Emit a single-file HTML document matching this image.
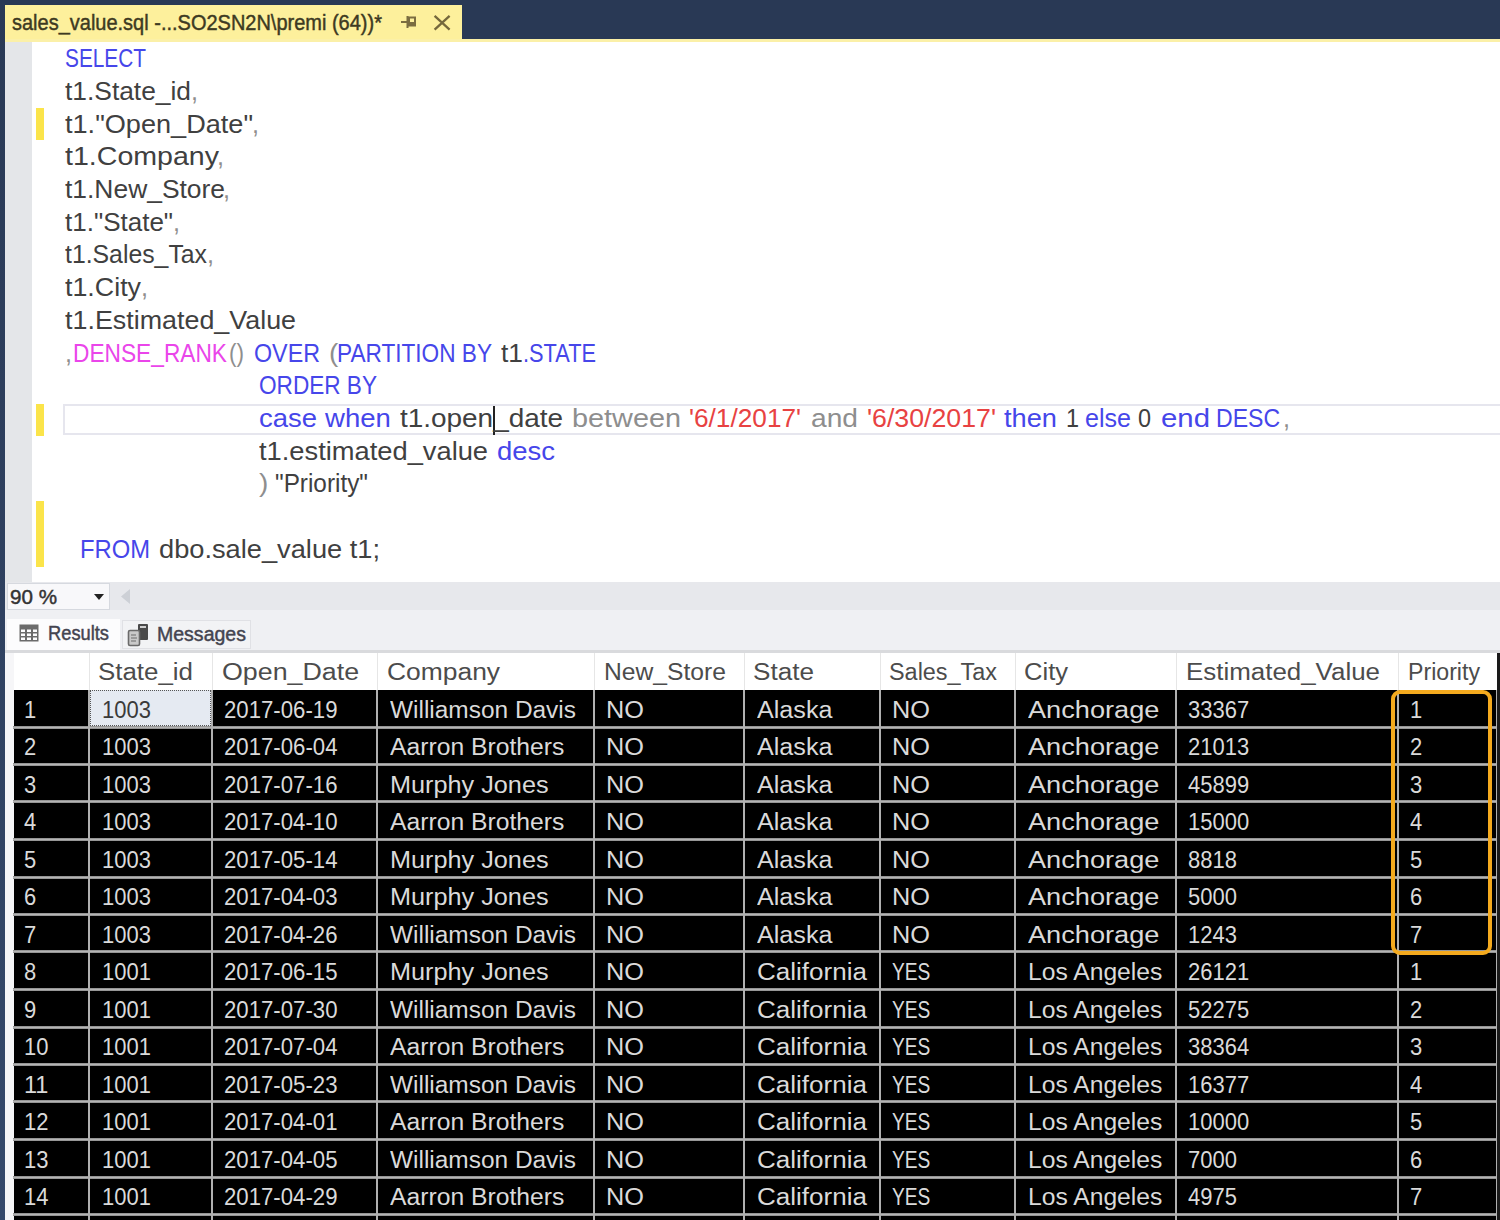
<!DOCTYPE html><html><head><meta charset="utf-8"><style>html,body{margin:0;padding:0;width:1500px;height:1220px;overflow:hidden;background:#fff;}body{position:relative;font-family:"Liberation Sans", sans-serif;}.b{position:absolute;}.t{position:absolute;white-space:pre;line-height:1.1171875;transform-origin:0 0;}</style></head><body><div class="b" style="left:0px;top:0px;width:1500px;height:39px;background:#293955;"></div><div class="b" style="left:0px;top:0px;width:5px;height:1220px;background:linear-gradient(#293955,#35496b);"></div><div class="b" style="left:5px;top:5px;width:457px;height:36px;background:#fdf09c;"></div><div class="b" style="left:5px;top:39px;width:1495px;height:3px;background:#fbf0a8;"></div><div class="b" style="left:5px;top:42px;width:27px;height:540px;background:#e4e6e9;"></div><div class="b" style="left:32px;top:42px;width:1468px;height:540px;background:#ffffff;"></div><div class="b" style="left:63px;top:404px;width:1445px;height:31px;background:transparent;border:2px solid #e6e6ee;box-sizing:border-box;"></div><div class="b" style="left:36px;top:108px;width:8px;height:32px;background:#fbe44a;"></div><div class="b" style="left:36px;top:404px;width:8px;height:32px;background:#fbe44a;"></div><div class="b" style="left:36px;top:501px;width:8px;height:66px;background:#fbe44a;"></div><div class="b" style="left:493px;top:406px;width:2px;height:29px;background:#222;"></div><svg class="b" style="left:400px;top:14px" width="20" height="18"><g stroke="#7b6d40" fill="none" stroke-width="2"><path d="M1 8 H7.5 M7.5 2 V14"/><rect x="9" y="3.5" width="6" height="8"/></g><rect x="8" y="8" width="8" height="4" fill="#7b6d40"/></svg><svg class="b" style="left:432px;top:14px" width="20" height="18"><path d="M2.6 1.8 L17.6 15.6 M17.6 1.8 L2.6 15.6" stroke="#75683c" stroke-width="2.3" fill="none"/></svg><div class="b" style="left:5px;top:582px;width:1495px;height:28px;background:#e7e8ec;"></div><div class="b" style="left:7px;top:583px;width:103px;height:27px;background:#f8f8fa;border:1px solid #d6d9df;box-sizing:border-box;"></div><svg class="b" style="left:93px;top:593px" width="12" height="8"><path d="M1 1 L11 1 L6 7 Z" fill="#222"/></svg><svg class="b" style="left:119px;top:588px" width="12" height="17"><path d="M11 1 L11 16 L2 8.5 Z" fill="#cdd0d6"/></svg><div class="b" style="left:5px;top:610px;width:1495px;height:40px;background:#eff0f3;"></div><div class="b" style="left:7px;top:619px;width:113px;height:31px;background:#fcfcfd;"></div><div class="b" style="left:122px;top:620px;width:129px;height:29px;background:#f2f3f5;border:1px solid #e0e1e5;box-sizing:border-box;"></div><svg class="b" style="left:19px;top:624px" width="20" height="18"><rect x="0.5" y="0.5" width="19" height="17" fill="#6b6b6b"/><g fill="#fcfcfd"><rect x="2" y="5.5" width="4" height="2.5"/><rect x="2" y="9.5" width="4" height="2.5"/><rect x="2" y="13.5" width="4" height="2.5"/><rect x="8" y="5.5" width="4" height="2.5"/><rect x="8" y="9.5" width="4" height="2.5"/><rect x="8" y="13.5" width="4" height="2.5"/><rect x="14" y="5.5" width="4" height="2.5"/><rect x="14" y="9.5" width="4" height="2.5"/><rect x="14" y="13.5" width="4" height="2.5"/></g></svg><svg class="b" style="left:127px;top:623px" width="22" height="24"><rect x="11" y="1" width="10" height="16" rx="1" fill="#4a4a4a"/><rect x="13" y="3" width="6" height="2" fill="#cfcfcf"/><rect x="1.5" y="7.5" width="11" height="15" rx="1.5" fill="#c9c9c9" stroke="#6a6a6a" stroke-width="1.6"/><path d="M4 12h5M4 15h6M4 18h5" stroke="#8a8a8a" stroke-width="1.3"/></svg><div class="b" style="left:5px;top:650px;width:1495px;height:3px;background:#d9dadd;"></div><div class="b" style="left:5px;top:653px;width:1495px;height:567px;background:#f6f6f8;"></div><div class="b" style="left:14px;top:653px;width:1483px;height:37px;background:#ffffff;"></div><div class="b" style="left:89px;top:653px;width:1px;height:37px;background:#e6e6e6;"></div><div class="b" style="left:212px;top:653px;width:1px;height:37px;background:#e6e6e6;"></div><div class="b" style="left:377px;top:653px;width:1px;height:37px;background:#e6e6e6;"></div><div class="b" style="left:594px;top:653px;width:1px;height:37px;background:#e6e6e6;"></div><div class="b" style="left:744px;top:653px;width:1px;height:37px;background:#e6e6e6;"></div><div class="b" style="left:880px;top:653px;width:1px;height:37px;background:#e6e6e6;"></div><div class="b" style="left:1015px;top:653px;width:1px;height:37px;background:#e6e6e6;"></div><div class="b" style="left:1176px;top:653px;width:1px;height:37px;background:#e6e6e6;"></div><div class="b" style="left:1398px;top:653px;width:1px;height:37px;background:#e6e6e6;"></div><div class="b" style="left:14px;top:690px;width:1483px;height:530px;background:#000;"></div><div class="b" style="left:13px;top:726px;width:1484px;height:3px;background:linear-gradient(#707070,#b4b4b4 30%,#b4b4b4 70%,#707070);"></div><div class="b" style="left:13px;top:763px;width:1484px;height:3px;background:linear-gradient(#707070,#b4b4b4 30%,#b4b4b4 70%,#707070);"></div><div class="b" style="left:13px;top:800px;width:1484px;height:3px;background:linear-gradient(#707070,#b4b4b4 30%,#b4b4b4 70%,#707070);"></div><div class="b" style="left:13px;top:838px;width:1484px;height:3px;background:linear-gradient(#707070,#b4b4b4 30%,#b4b4b4 70%,#707070);"></div><div class="b" style="left:13px;top:876px;width:1484px;height:3px;background:linear-gradient(#707070,#b4b4b4 30%,#b4b4b4 70%,#707070);"></div><div class="b" style="left:13px;top:913px;width:1484px;height:3px;background:linear-gradient(#707070,#b4b4b4 30%,#b4b4b4 70%,#707070);"></div><div class="b" style="left:13px;top:950px;width:1484px;height:3px;background:linear-gradient(#707070,#b4b4b4 30%,#b4b4b4 70%,#707070);"></div><div class="b" style="left:13px;top:988px;width:1484px;height:3px;background:linear-gradient(#707070,#b4b4b4 30%,#b4b4b4 70%,#707070);"></div><div class="b" style="left:13px;top:1026px;width:1484px;height:3px;background:linear-gradient(#707070,#b4b4b4 30%,#b4b4b4 70%,#707070);"></div><div class="b" style="left:13px;top:1063px;width:1484px;height:3px;background:linear-gradient(#707070,#b4b4b4 30%,#b4b4b4 70%,#707070);"></div><div class="b" style="left:13px;top:1100px;width:1484px;height:3px;background:linear-gradient(#707070,#b4b4b4 30%,#b4b4b4 70%,#707070);"></div><div class="b" style="left:13px;top:1138px;width:1484px;height:3px;background:linear-gradient(#707070,#b4b4b4 30%,#b4b4b4 70%,#707070);"></div><div class="b" style="left:13px;top:1176px;width:1484px;height:3px;background:linear-gradient(#707070,#b4b4b4 30%,#b4b4b4 70%,#707070);"></div><div class="b" style="left:13px;top:1213px;width:1484px;height:3px;background:linear-gradient(#707070,#b4b4b4 30%,#b4b4b4 70%,#707070);"></div><div class="b" style="left:88px;top:690px;width:2px;height:530px;background:#b0b0b0;"></div><div class="b" style="left:211px;top:690px;width:2px;height:530px;background:#b0b0b0;"></div><div class="b" style="left:376px;top:690px;width:2px;height:530px;background:#b0b0b0;"></div><div class="b" style="left:593px;top:690px;width:2px;height:530px;background:#b0b0b0;"></div><div class="b" style="left:743px;top:690px;width:2px;height:530px;background:#b0b0b0;"></div><div class="b" style="left:879px;top:690px;width:2px;height:530px;background:#b0b0b0;"></div><div class="b" style="left:1014px;top:690px;width:2px;height:530px;background:#b0b0b0;"></div><div class="b" style="left:1175px;top:690px;width:2px;height:530px;background:#b0b0b0;"></div><div class="b" style="left:1397px;top:690px;width:2px;height:530px;background:#b0b0b0;"></div><div class="b" style="left:1496px;top:690px;width:2px;height:530px;background:#b0b0b0;"></div><div class="b" style="left:1497px;top:653px;width:3px;height:567px;background:#1a1a1a;"></div><div class="b" style="left:90px;top:690px;width:121px;height:36px;background:#e5eaf2;border:1px dotted #555;box-sizing:border-box;"></div><div class="b" style="left:1391px;top:690px;width:101px;height:265px;background:transparent;border:4px solid #f4aa1e;border-radius:9px;box-sizing:border-box;"></div><div class="t" id="t0" style="left:65.0px;top:44.07px;font-size:26px;color:#4646ea;transform:scaleX(0.8012);">SELECT</div><div class="t" id="t1" style="left:65.0px;top:76.79px;font-size:26px;color:#404040;transform:scaleX(1.0137);">t1.State_id</div><div class="t" id="t2" style="left:65.0px;top:109.51px;font-size:26px;color:#404040;transform:scaleX(1.0427);">t1.&quot;Open_Date&quot;</div><div class="t" id="t3" style="left:65.0px;top:142.23px;font-size:26px;color:#404040;transform:scaleX(1.0984);">t1.Company</div><div class="t" id="t4" style="left:65.0px;top:174.95px;font-size:26px;color:#404040;transform:scaleX(1.0159);">t1.New_Store</div><div class="t" id="t5" style="left:65.0px;top:207.67px;font-size:26px;color:#404040;">t1.&quot;State&quot;</div><div class="t" id="t6" style="left:65.0px;top:240.39px;font-size:26px;color:#404040;transform:scaleX(0.9537);">t1.Sales_Tax</div><div class="t" id="t7" style="left:65.0px;top:273.11px;font-size:26px;color:#404040;transform:scaleX(1.0312);">t1.City</div><div class="t" id="t8" style="left:65.0px;top:305.83px;font-size:26px;color:#404040;transform:scaleX(1.0336);">t1.Estimated_Value</div><div class="t" id="t9" style="left:65.0px;top:338.55px;font-size:26px;color:#8e8e8e;transform:scaleX(0.9664);">,</div><div class="t" id="t10" style="left:73.0px;top:338.55px;font-size:26px;color:#ea45ea;transform:scaleX(0.8735);">DENSE_RANK</div><div class="t" id="t11" style="left:229.0px;top:338.55px;font-size:26px;color:#8e8e8e;transform:scaleX(0.8671);">()</div><div class="t" id="t12" style="left:254.0px;top:338.55px;font-size:26px;color:#4646ea;transform:scaleX(0.8955);">OVER</div><div class="t" id="t13" style="left:329.0px;top:338.55px;font-size:26px;color:#8e8e8e;transform:scaleX(1.0740);">(</div><div class="t" id="t14" style="left:337.0px;top:338.55px;font-size:26px;color:#4646ea;transform:scaleX(0.8698);">PARTITION BY</div><div class="t" id="t15" style="left:501.0px;top:338.55px;font-size:26px;color:#404040;transform:scaleX(1.0138);">t1</div><div class="t" id="t16" style="left:523.0px;top:338.55px;font-size:26px;color:#4646ea;transform:scaleX(0.8372);">.STATE</div><div class="t" id="t17" style="left:259.0px;top:371.27px;font-size:26px;color:#4646ea;transform:scaleX(0.8689);">ORDER BY</div><div class="t" id="t18" style="left:259.0px;top:403.99px;font-size:26px;color:#4646ea;transform:scaleX(1.0565);">case</div><div class="t" id="t19" style="left:325.1px;top:403.99px;font-size:26px;color:#4646ea;transform:scaleX(1.0594);">when</div><div class="t" id="t20" style="left:400.0px;top:403.99px;font-size:26px;color:#404040;transform:scaleX(1.0738);">t1.open_date</div><div class="t" id="t21" style="left:572.0px;top:403.99px;font-size:26px;color:#8e8e8e;transform:scaleX(1.1089);">between</div><div class="t" id="t22" style="left:689.0px;top:403.99px;font-size:26px;color:#e84242;transform:scaleX(1.0081);">&#x27;6/1/2017&#x27;</div><div class="t" id="t23" style="left:811.0px;top:403.99px;font-size:26px;color:#8e8e8e;transform:scaleX(1.0829);">and</div><div class="t" id="t24" style="left:867.0px;top:403.99px;font-size:26px;color:#e84242;transform:scaleX(1.0271);">&#x27;6/30/2017&#x27;</div><div class="t" id="t25" style="left:1004.0px;top:403.99px;font-size:26px;color:#4646ea;transform:scaleX(1.0474);">then</div><div class="t" id="t26" style="left:1066.0px;top:403.99px;font-size:26px;color:#404040;transform:scaleX(0.9028);">1</div><div class="t" id="t27" style="left:1085.0px;top:403.99px;font-size:26px;color:#4646ea;transform:scaleX(0.9644);">else</div><div class="t" id="t28" style="left:1138.0px;top:403.99px;font-size:26px;color:#404040;transform:scaleX(0.9028);">0</div><div class="t" id="t29" style="left:1161.0px;top:403.99px;font-size:26px;color:#4646ea;transform:scaleX(1.1290);">end</div><div class="t" id="t30" style="left:1216.0px;top:403.99px;font-size:26px;color:#4646ea;transform:scaleX(0.8864);">DESC</div><div class="t" id="t31" style="left:1283.0px;top:403.99px;font-size:26px;color:#8e8e8e;transform:scaleX(0.9664);">,</div><div class="t" id="t32" style="left:259.0px;top:436.71px;font-size:26px;color:#404040;transform:scaleX(1.0495);">t1.estimated_value</div><div class="t" id="t33" style="left:497.0px;top:436.71px;font-size:26px;color:#4646ea;transform:scaleX(1.0565);">desc</div><div class="t" id="t34" style="left:259.0px;top:469.43px;font-size:26px;color:#8e8e8e;transform:scaleX(1.0740);">)</div><div class="t" id="t35" style="left:275.0px;top:469.43px;font-size:26px;color:#404040;transform:scaleX(0.9356);">&quot;Priority&quot;</div><div class="t" id="t36" style="left:80.0px;top:534.87px;font-size:26px;color:#4646ea;transform:scaleX(0.9150);">FROM</div><div class="t" id="t37" style="left:159.0px;top:534.87px;font-size:26px;color:#404040;transform:scaleX(1.0474);">dbo.sale_value t1;</div><div class="t" id="t38" style="left:191.0px;top:76.79px;font-size:26px;color:#8e8e8e;transform:scaleX(0.9664);">,</div><div class="t" id="t39" style="left:252.0px;top:109.51px;font-size:26px;color:#8e8e8e;transform:scaleX(0.9664);">,</div><div class="t" id="t40" style="left:217.0px;top:142.23px;font-size:26px;color:#8e8e8e;transform:scaleX(0.9664);">,</div><div class="t" id="t41" style="left:223.0px;top:174.95px;font-size:26px;color:#8e8e8e;transform:scaleX(0.9664);">,</div><div class="t" id="t42" style="left:173.0px;top:207.67px;font-size:26px;color:#8e8e8e;transform:scaleX(0.9664);">,</div><div class="t" id="t43" style="left:207.0px;top:240.39px;font-size:26px;color:#8e8e8e;transform:scaleX(0.9664);">,</div><div class="t" id="t44" style="left:141.0px;top:273.11px;font-size:26px;color:#8e8e8e;transform:scaleX(0.9664);">,</div><div class="t" id="t45" style="left:12.0px;top:11.39px;font-size:22px;color:#3d3a22;-webkit-text-stroke:0.45px #3d3a22;transform:scaleX(0.9086);">sales_value.sql -...SO2SN2N\premi (64))*</div><div class="t" id="t46" style="left:10.0px;top:585.90px;font-size:20px;color:#333;-webkit-text-stroke:0.45px #333;transform:scaleX(1.0307);">90 %</div><div class="t" id="t47" style="left:48.0px;top:621.90px;font-size:20px;color:#444450;-webkit-text-stroke:0.45px #444450;transform:scaleX(0.9145);">Results</div><div class="t" id="t48" style="left:157.0px;top:623.40px;font-size:20px;color:#444450;-webkit-text-stroke:0.45px #444450;transform:scaleX(0.9759);">Messages</div><div class="t" id="t49" style="left:97.7px;top:660.48px;font-size:23px;color:#4c4c4c;transform:scaleX(1.1256);">State_id</div><div class="t" id="t50" style="left:221.6px;top:660.48px;font-size:23px;color:#4c4c4c;transform:scaleX(1.1650);">Open_Date</div><div class="t" id="t51" style="left:387.0px;top:660.48px;font-size:23px;color:#4c4c4c;transform:scaleX(1.1484);">Company</div><div class="t" id="t52" style="left:604.0px;top:660.48px;font-size:23px;color:#4c4c4c;transform:scaleX(1.0721);">New_Store</div><div class="t" id="t53" style="left:753.0px;top:660.48px;font-size:23px;color:#4c4c4c;transform:scaleX(1.1359);">State</div><div class="t" id="t54" style="left:889.0px;top:660.48px;font-size:23px;color:#4c4c4c;transform:scaleX(1.0179);">Sales_Tax</div><div class="t" id="t55" style="left:1024.0px;top:660.48px;font-size:23px;color:#4c4c4c;transform:scaleX(1.1111);">City</div><div class="t" id="t56" style="left:1186.0px;top:660.48px;font-size:23px;color:#4c4c4c;transform:scaleX(1.1266);">Estimated_Value</div><div class="t" id="t57" style="left:1408.0px;top:660.48px;font-size:23px;color:#4c4c4c;transform:scaleX(1.0056);">Priority</div><div class="t" id="t58" style="left:24.0px;top:697.68px;font-size:23px;color:#dadada;transform:scaleX(0.9556);">1</div><div class="t" id="t59" style="left:102.0px;top:697.68px;font-size:23px;color:#3a3a3a;transform:scaleX(0.9556);">1003</div><div class="t" id="t60" style="left:224.0px;top:697.68px;font-size:23px;color:#dadada;transform:scaleX(0.9644);">2017-06-19</div><div class="t" id="t61" style="left:390.0px;top:697.68px;font-size:23px;color:#dadada;transform:scaleX(1.0622);">Williamson Davis</div><div class="t" id="t62" style="left:606.0px;top:697.68px;font-size:23px;color:#dadada;transform:scaleX(1.1006);">NO</div><div class="t" id="t63" style="left:757.0px;top:697.68px;font-size:23px;color:#dadada;transform:scaleX(1.0926);">Alaska</div><div class="t" id="t64" style="left:892.0px;top:697.68px;font-size:23px;color:#dadada;transform:scaleX(1.1006);">NO</div><div class="t" id="t65" style="left:1028.0px;top:697.68px;font-size:23px;color:#dadada;transform:scaleX(1.1813);">Anchorage</div><div class="t" id="t66" style="left:1188.0px;top:697.68px;font-size:23px;color:#dadada;transform:scaleX(0.9556);">33367</div><div class="t" id="t67" style="left:1410.0px;top:697.68px;font-size:23px;color:#dadada;transform:scaleX(0.9556);">1</div><div class="t" id="t68" style="left:24.0px;top:735.18px;font-size:23px;color:#dadada;transform:scaleX(0.9556);">2</div><div class="t" id="t69" style="left:102.0px;top:735.18px;font-size:23px;color:#dadada;transform:scaleX(0.9556);">1003</div><div class="t" id="t70" style="left:224.0px;top:735.18px;font-size:23px;color:#dadada;transform:scaleX(0.9644);">2017-06-04</div><div class="t" id="t71" style="left:390.0px;top:735.18px;font-size:23px;color:#dadada;transform:scaleX(1.0735);">Aarron Brothers</div><div class="t" id="t72" style="left:606.0px;top:735.18px;font-size:23px;color:#dadada;transform:scaleX(1.1006);">NO</div><div class="t" id="t73" style="left:757.0px;top:735.18px;font-size:23px;color:#dadada;transform:scaleX(1.0926);">Alaska</div><div class="t" id="t74" style="left:892.0px;top:735.18px;font-size:23px;color:#dadada;transform:scaleX(1.1006);">NO</div><div class="t" id="t75" style="left:1028.0px;top:735.18px;font-size:23px;color:#dadada;transform:scaleX(1.1813);">Anchorage</div><div class="t" id="t76" style="left:1188.0px;top:735.18px;font-size:23px;color:#dadada;transform:scaleX(0.9556);">21013</div><div class="t" id="t77" style="left:1410.0px;top:735.18px;font-size:23px;color:#dadada;transform:scaleX(0.9556);">2</div><div class="t" id="t78" style="left:24.0px;top:772.68px;font-size:23px;color:#dadada;transform:scaleX(0.9556);">3</div><div class="t" id="t79" style="left:102.0px;top:772.68px;font-size:23px;color:#dadada;transform:scaleX(0.9556);">1003</div><div class="t" id="t80" style="left:224.0px;top:772.68px;font-size:23px;color:#dadada;transform:scaleX(0.9644);">2017-07-16</div><div class="t" id="t81" style="left:390.0px;top:772.68px;font-size:23px;color:#dadada;transform:scaleX(1.0975);">Murphy Jones</div><div class="t" id="t82" style="left:606.0px;top:772.68px;font-size:23px;color:#dadada;transform:scaleX(1.1006);">NO</div><div class="t" id="t83" style="left:757.0px;top:772.68px;font-size:23px;color:#dadada;transform:scaleX(1.0926);">Alaska</div><div class="t" id="t84" style="left:892.0px;top:772.68px;font-size:23px;color:#dadada;transform:scaleX(1.1006);">NO</div><div class="t" id="t85" style="left:1028.0px;top:772.68px;font-size:23px;color:#dadada;transform:scaleX(1.1813);">Anchorage</div><div class="t" id="t86" style="left:1188.0px;top:772.68px;font-size:23px;color:#dadada;transform:scaleX(0.9556);">45899</div><div class="t" id="t87" style="left:1410.0px;top:772.68px;font-size:23px;color:#dadada;transform:scaleX(0.9556);">3</div><div class="t" id="t88" style="left:24.0px;top:810.18px;font-size:23px;color:#dadada;transform:scaleX(0.9556);">4</div><div class="t" id="t89" style="left:102.0px;top:810.18px;font-size:23px;color:#dadada;transform:scaleX(0.9556);">1003</div><div class="t" id="t90" style="left:224.0px;top:810.18px;font-size:23px;color:#dadada;transform:scaleX(0.9644);">2017-04-10</div><div class="t" id="t91" style="left:390.0px;top:810.18px;font-size:23px;color:#dadada;transform:scaleX(1.0735);">Aarron Brothers</div><div class="t" id="t92" style="left:606.0px;top:810.18px;font-size:23px;color:#dadada;transform:scaleX(1.1006);">NO</div><div class="t" id="t93" style="left:757.0px;top:810.18px;font-size:23px;color:#dadada;transform:scaleX(1.0926);">Alaska</div><div class="t" id="t94" style="left:892.0px;top:810.18px;font-size:23px;color:#dadada;transform:scaleX(1.1006);">NO</div><div class="t" id="t95" style="left:1028.0px;top:810.18px;font-size:23px;color:#dadada;transform:scaleX(1.1813);">Anchorage</div><div class="t" id="t96" style="left:1188.0px;top:810.18px;font-size:23px;color:#dadada;transform:scaleX(0.9556);">15000</div><div class="t" id="t97" style="left:1410.0px;top:810.18px;font-size:23px;color:#dadada;transform:scaleX(0.9556);">4</div><div class="t" id="t98" style="left:24.0px;top:847.68px;font-size:23px;color:#dadada;transform:scaleX(0.9556);">5</div><div class="t" id="t99" style="left:102.0px;top:847.68px;font-size:23px;color:#dadada;transform:scaleX(0.9556);">1003</div><div class="t" id="t100" style="left:224.0px;top:847.68px;font-size:23px;color:#dadada;transform:scaleX(0.9644);">2017-05-14</div><div class="t" id="t101" style="left:390.0px;top:847.68px;font-size:23px;color:#dadada;transform:scaleX(1.0975);">Murphy Jones</div><div class="t" id="t102" style="left:606.0px;top:847.68px;font-size:23px;color:#dadada;transform:scaleX(1.1006);">NO</div><div class="t" id="t103" style="left:757.0px;top:847.68px;font-size:23px;color:#dadada;transform:scaleX(1.0926);">Alaska</div><div class="t" id="t104" style="left:892.0px;top:847.68px;font-size:23px;color:#dadada;transform:scaleX(1.1006);">NO</div><div class="t" id="t105" style="left:1028.0px;top:847.68px;font-size:23px;color:#dadada;transform:scaleX(1.1813);">Anchorage</div><div class="t" id="t106" style="left:1188.0px;top:847.68px;font-size:23px;color:#dadada;transform:scaleX(0.9556);">8818</div><div class="t" id="t107" style="left:1410.0px;top:847.68px;font-size:23px;color:#dadada;transform:scaleX(0.9556);">5</div><div class="t" id="t108" style="left:24.0px;top:885.18px;font-size:23px;color:#dadada;transform:scaleX(0.9556);">6</div><div class="t" id="t109" style="left:102.0px;top:885.18px;font-size:23px;color:#dadada;transform:scaleX(0.9556);">1003</div><div class="t" id="t110" style="left:224.0px;top:885.18px;font-size:23px;color:#dadada;transform:scaleX(0.9644);">2017-04-03</div><div class="t" id="t111" style="left:390.0px;top:885.18px;font-size:23px;color:#dadada;transform:scaleX(1.0975);">Murphy Jones</div><div class="t" id="t112" style="left:606.0px;top:885.18px;font-size:23px;color:#dadada;transform:scaleX(1.1006);">NO</div><div class="t" id="t113" style="left:757.0px;top:885.18px;font-size:23px;color:#dadada;transform:scaleX(1.0926);">Alaska</div><div class="t" id="t114" style="left:892.0px;top:885.18px;font-size:23px;color:#dadada;transform:scaleX(1.1006);">NO</div><div class="t" id="t115" style="left:1028.0px;top:885.18px;font-size:23px;color:#dadada;transform:scaleX(1.1813);">Anchorage</div><div class="t" id="t116" style="left:1188.0px;top:885.18px;font-size:23px;color:#dadada;transform:scaleX(0.9556);">5000</div><div class="t" id="t117" style="left:1410.0px;top:885.18px;font-size:23px;color:#dadada;transform:scaleX(0.9556);">6</div><div class="t" id="t118" style="left:24.0px;top:922.68px;font-size:23px;color:#dadada;transform:scaleX(0.9556);">7</div><div class="t" id="t119" style="left:102.0px;top:922.68px;font-size:23px;color:#dadada;transform:scaleX(0.9556);">1003</div><div class="t" id="t120" style="left:224.0px;top:922.68px;font-size:23px;color:#dadada;transform:scaleX(0.9644);">2017-04-26</div><div class="t" id="t121" style="left:390.0px;top:922.68px;font-size:23px;color:#dadada;transform:scaleX(1.0622);">Williamson Davis</div><div class="t" id="t122" style="left:606.0px;top:922.68px;font-size:23px;color:#dadada;transform:scaleX(1.1006);">NO</div><div class="t" id="t123" style="left:757.0px;top:922.68px;font-size:23px;color:#dadada;transform:scaleX(1.0926);">Alaska</div><div class="t" id="t124" style="left:892.0px;top:922.68px;font-size:23px;color:#dadada;transform:scaleX(1.1006);">NO</div><div class="t" id="t125" style="left:1028.0px;top:922.68px;font-size:23px;color:#dadada;transform:scaleX(1.1813);">Anchorage</div><div class="t" id="t126" style="left:1188.0px;top:922.68px;font-size:23px;color:#dadada;transform:scaleX(0.9556);">1243</div><div class="t" id="t127" style="left:1410.0px;top:922.68px;font-size:23px;color:#dadada;transform:scaleX(0.9556);">7</div><div class="t" id="t128" style="left:24.0px;top:960.18px;font-size:23px;color:#dadada;transform:scaleX(0.9556);">8</div><div class="t" id="t129" style="left:102.0px;top:960.18px;font-size:23px;color:#dadada;transform:scaleX(0.9556);">1001</div><div class="t" id="t130" style="left:224.0px;top:960.18px;font-size:23px;color:#dadada;transform:scaleX(0.9644);">2017-06-15</div><div class="t" id="t131" style="left:390.0px;top:960.18px;font-size:23px;color:#dadada;transform:scaleX(1.0975);">Murphy Jones</div><div class="t" id="t132" style="left:606.0px;top:960.18px;font-size:23px;color:#dadada;transform:scaleX(1.1006);">NO</div><div class="t" id="t133" style="left:757.0px;top:960.18px;font-size:23px;color:#dadada;transform:scaleX(1.1317);">California</div><div class="t" id="t134" style="left:892.0px;top:960.18px;font-size:23px;color:#dadada;transform:scaleX(0.8338);">YES</div><div class="t" id="t135" style="left:1028.0px;top:960.18px;font-size:23px;color:#dadada;transform:scaleX(1.0721);">Los Angeles</div><div class="t" id="t136" style="left:1188.0px;top:960.18px;font-size:23px;color:#dadada;transform:scaleX(0.9556);">26121</div><div class="t" id="t137" style="left:1410.0px;top:960.18px;font-size:23px;color:#dadada;transform:scaleX(0.9556);">1</div><div class="t" id="t138" style="left:24.0px;top:997.68px;font-size:23px;color:#dadada;transform:scaleX(0.9556);">9</div><div class="t" id="t139" style="left:102.0px;top:997.68px;font-size:23px;color:#dadada;transform:scaleX(0.9556);">1001</div><div class="t" id="t140" style="left:224.0px;top:997.68px;font-size:23px;color:#dadada;transform:scaleX(0.9644);">2017-07-30</div><div class="t" id="t141" style="left:390.0px;top:997.68px;font-size:23px;color:#dadada;transform:scaleX(1.0622);">Williamson Davis</div><div class="t" id="t142" style="left:606.0px;top:997.68px;font-size:23px;color:#dadada;transform:scaleX(1.1006);">NO</div><div class="t" id="t143" style="left:757.0px;top:997.68px;font-size:23px;color:#dadada;transform:scaleX(1.1317);">California</div><div class="t" id="t144" style="left:892.0px;top:997.68px;font-size:23px;color:#dadada;transform:scaleX(0.8338);">YES</div><div class="t" id="t145" style="left:1028.0px;top:997.68px;font-size:23px;color:#dadada;transform:scaleX(1.0721);">Los Angeles</div><div class="t" id="t146" style="left:1188.0px;top:997.68px;font-size:23px;color:#dadada;transform:scaleX(0.9556);">52275</div><div class="t" id="t147" style="left:1410.0px;top:997.68px;font-size:23px;color:#dadada;transform:scaleX(0.9556);">2</div><div class="t" id="t148" style="left:24.0px;top:1035.18px;font-size:23px;color:#dadada;transform:scaleX(0.9556);">10</div><div class="t" id="t149" style="left:102.0px;top:1035.18px;font-size:23px;color:#dadada;transform:scaleX(0.9556);">1001</div><div class="t" id="t150" style="left:224.0px;top:1035.18px;font-size:23px;color:#dadada;transform:scaleX(0.9644);">2017-07-04</div><div class="t" id="t151" style="left:390.0px;top:1035.18px;font-size:23px;color:#dadada;transform:scaleX(1.0735);">Aarron Brothers</div><div class="t" id="t152" style="left:606.0px;top:1035.18px;font-size:23px;color:#dadada;transform:scaleX(1.1006);">NO</div><div class="t" id="t153" style="left:757.0px;top:1035.18px;font-size:23px;color:#dadada;transform:scaleX(1.1317);">California</div><div class="t" id="t154" style="left:892.0px;top:1035.18px;font-size:23px;color:#dadada;transform:scaleX(0.8338);">YES</div><div class="t" id="t155" style="left:1028.0px;top:1035.18px;font-size:23px;color:#dadada;transform:scaleX(1.0721);">Los Angeles</div><div class="t" id="t156" style="left:1188.0px;top:1035.18px;font-size:23px;color:#dadada;transform:scaleX(0.9556);">38364</div><div class="t" id="t157" style="left:1410.0px;top:1035.18px;font-size:23px;color:#dadada;transform:scaleX(0.9556);">3</div><div class="t" id="t158" style="left:24.0px;top:1072.68px;font-size:23px;color:#dadada;transform:scaleX(1.0239);">11</div><div class="t" id="t159" style="left:102.0px;top:1072.68px;font-size:23px;color:#dadada;transform:scaleX(0.9556);">1001</div><div class="t" id="t160" style="left:224.0px;top:1072.68px;font-size:23px;color:#dadada;transform:scaleX(0.9644);">2017-05-23</div><div class="t" id="t161" style="left:390.0px;top:1072.68px;font-size:23px;color:#dadada;transform:scaleX(1.0622);">Williamson Davis</div><div class="t" id="t162" style="left:606.0px;top:1072.68px;font-size:23px;color:#dadada;transform:scaleX(1.1006);">NO</div><div class="t" id="t163" style="left:757.0px;top:1072.68px;font-size:23px;color:#dadada;transform:scaleX(1.1317);">California</div><div class="t" id="t164" style="left:892.0px;top:1072.68px;font-size:23px;color:#dadada;transform:scaleX(0.8338);">YES</div><div class="t" id="t165" style="left:1028.0px;top:1072.68px;font-size:23px;color:#dadada;transform:scaleX(1.0721);">Los Angeles</div><div class="t" id="t166" style="left:1188.0px;top:1072.68px;font-size:23px;color:#dadada;transform:scaleX(0.9556);">16377</div><div class="t" id="t167" style="left:1410.0px;top:1072.68px;font-size:23px;color:#dadada;transform:scaleX(0.9556);">4</div><div class="t" id="t168" style="left:24.0px;top:1110.18px;font-size:23px;color:#dadada;transform:scaleX(0.9556);">12</div><div class="t" id="t169" style="left:102.0px;top:1110.18px;font-size:23px;color:#dadada;transform:scaleX(0.9556);">1001</div><div class="t" id="t170" style="left:224.0px;top:1110.18px;font-size:23px;color:#dadada;transform:scaleX(0.9644);">2017-04-01</div><div class="t" id="t171" style="left:390.0px;top:1110.18px;font-size:23px;color:#dadada;transform:scaleX(1.0735);">Aarron Brothers</div><div class="t" id="t172" style="left:606.0px;top:1110.18px;font-size:23px;color:#dadada;transform:scaleX(1.1006);">NO</div><div class="t" id="t173" style="left:757.0px;top:1110.18px;font-size:23px;color:#dadada;transform:scaleX(1.1317);">California</div><div class="t" id="t174" style="left:892.0px;top:1110.18px;font-size:23px;color:#dadada;transform:scaleX(0.8338);">YES</div><div class="t" id="t175" style="left:1028.0px;top:1110.18px;font-size:23px;color:#dadada;transform:scaleX(1.0721);">Los Angeles</div><div class="t" id="t176" style="left:1188.0px;top:1110.18px;font-size:23px;color:#dadada;transform:scaleX(0.9556);">10000</div><div class="t" id="t177" style="left:1410.0px;top:1110.18px;font-size:23px;color:#dadada;transform:scaleX(0.9556);">5</div><div class="t" id="t178" style="left:24.0px;top:1147.68px;font-size:23px;color:#dadada;transform:scaleX(0.9556);">13</div><div class="t" id="t179" style="left:102.0px;top:1147.68px;font-size:23px;color:#dadada;transform:scaleX(0.9556);">1001</div><div class="t" id="t180" style="left:224.0px;top:1147.68px;font-size:23px;color:#dadada;transform:scaleX(0.9644);">2017-04-05</div><div class="t" id="t181" style="left:390.0px;top:1147.68px;font-size:23px;color:#dadada;transform:scaleX(1.0622);">Williamson Davis</div><div class="t" id="t182" style="left:606.0px;top:1147.68px;font-size:23px;color:#dadada;transform:scaleX(1.1006);">NO</div><div class="t" id="t183" style="left:757.0px;top:1147.68px;font-size:23px;color:#dadada;transform:scaleX(1.1317);">California</div><div class="t" id="t184" style="left:892.0px;top:1147.68px;font-size:23px;color:#dadada;transform:scaleX(0.8338);">YES</div><div class="t" id="t185" style="left:1028.0px;top:1147.68px;font-size:23px;color:#dadada;transform:scaleX(1.0721);">Los Angeles</div><div class="t" id="t186" style="left:1188.0px;top:1147.68px;font-size:23px;color:#dadada;transform:scaleX(0.9556);">7000</div><div class="t" id="t187" style="left:1410.0px;top:1147.68px;font-size:23px;color:#dadada;transform:scaleX(0.9556);">6</div><div class="t" id="t188" style="left:24.0px;top:1185.18px;font-size:23px;color:#dadada;transform:scaleX(0.9556);">14</div><div class="t" id="t189" style="left:102.0px;top:1185.18px;font-size:23px;color:#dadada;transform:scaleX(0.9556);">1001</div><div class="t" id="t190" style="left:224.0px;top:1185.18px;font-size:23px;color:#dadada;transform:scaleX(0.9644);">2017-04-29</div><div class="t" id="t191" style="left:390.0px;top:1185.18px;font-size:23px;color:#dadada;transform:scaleX(1.0735);">Aarron Brothers</div><div class="t" id="t192" style="left:606.0px;top:1185.18px;font-size:23px;color:#dadada;transform:scaleX(1.1006);">NO</div><div class="t" id="t193" style="left:757.0px;top:1185.18px;font-size:23px;color:#dadada;transform:scaleX(1.1317);">California</div><div class="t" id="t194" style="left:892.0px;top:1185.18px;font-size:23px;color:#dadada;transform:scaleX(0.8338);">YES</div><div class="t" id="t195" style="left:1028.0px;top:1185.18px;font-size:23px;color:#dadada;transform:scaleX(1.0721);">Los Angeles</div><div class="t" id="t196" style="left:1188.0px;top:1185.18px;font-size:23px;color:#dadada;transform:scaleX(0.9556);">4975</div><div class="t" id="t197" style="left:1410.0px;top:1185.18px;font-size:23px;color:#dadada;transform:scaleX(0.9556);">7</div></body></html>
